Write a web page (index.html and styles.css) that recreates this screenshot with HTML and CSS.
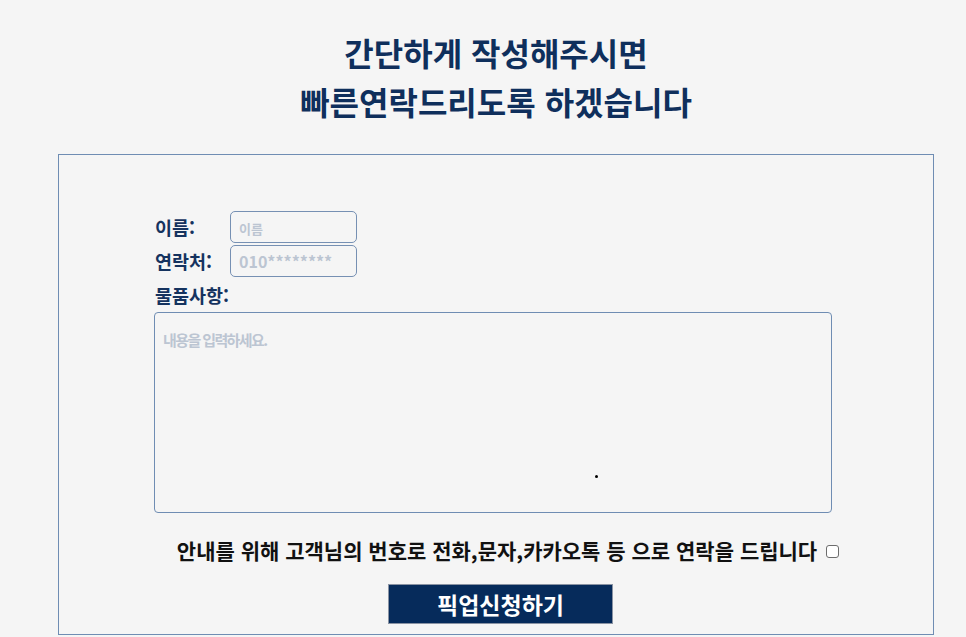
FILE: index.html
```html
<!DOCTYPE html>
<html lang="ko">
<head>
<meta charset="utf-8">
<title>픽업신청</title>
<link rel="stylesheet" href="styles.css">
</head>
<body>
<div class="page">
  <h2 class="title">간단하게 작성해주시면<br>빠른연락드리도록 하겠습니다</h2>
  <form class="box">
    <div class="fields">
      <label class="lbl" for="name">이름:</label>
      <input class="inp name-inp" id="name" type="text" placeholder="이름">
      <label class="lbl" for="tel">연락처:</label>
      <input class="inp" id="tel" type="text" placeholder="010********">
    </div>
    <div class="lbl memo-lbl">물품사항:</div>
    <div class="memo-wrap">
      <textarea class="memo" placeholder="내용을 입력하세요."></textarea>
      <span class="dot"></span>
    </div>
    <div class="consent">
      <span>안내를 위해 고객님의 번호로 전화,문자,카카오톡 등 으로 연락을 드립니다</span>
      <span class="chk"></span>
    </div>
    <div class="btn-row">
      <button type="button" class="btn">픽업신청하기</button>
    </div>
  </form>
</div>
</body>
</html>
```

FILE: styles.css
```css
html, body {
  margin: 0;
  padding: 0;
  background: #f5f5f5;
}
body {
  font-family: "Noto Sans CJK KR", "Noto Sans", sans-serif;
  height: 637px;
  overflow: hidden;
}
.page {
  width: 876px;
  margin-left: 58px;
}
.title {
  margin: 28px 0 0;
  text-align: center;
  font-size: 32px;
  line-height: 49px;
  font-weight: 700;
  color: #0f2f5c;
}
.box {
  margin-top: 28px;
  height: 481px;
  border: 1px solid #6f8db3;
  box-sizing: border-box;
  padding: 56px 0 0 96px;
}
.fields {
  display: grid;
  grid-template-columns: 75px 127px;
  grid-auto-rows: 32px;
  row-gap: 2px;
  align-items: center;
}
.lbl {
  font-size: 18.5px;
  font-weight: 700;
  color: #15335f;
  line-height: 24px;
}
.inp {
  box-sizing: border-box;
  width: 127px;
  height: 32px;
  border: 1px solid #7690b3;
  border-radius: 5px;
  background: #f5f5f5;
  padding: 0 8px;
  font-family: "Noto Sans CJK KR", sans-serif;
  font-size: 16px;
  font-weight: 700;
  outline: none;
}
.inp::placeholder {
  color: #bcc5d2;
}
.name-inp::placeholder {
  font-size: 13px;
}
.memo-lbl {
  margin-top: 6px;
  height: 24px;
}
.memo-wrap {
  position: relative;
  margin-top: 5px;
  width: 678px;
  margin-left: -1px;
}
.memo {
  display: block;
  box-sizing: border-box;
  width: 678px;
  height: 201px;
  border: 1px solid #6f8db3;
  border-radius: 4px;
  background: #f5f5f5;
  padding: 16px 8px;
  font-family: "Noto Sans CJK KR", sans-serif;
  font-size: 15px;
  font-weight: 700;
  line-height: 22px;
  resize: none;
  outline: none;
}
.memo::placeholder {
  color: #bcc5d2;
  letter-spacing: -1.6px;
}
.dot {
  position: absolute;
  left: 441px;
  top: 163px;
  width: 3px;
  height: 3px;
  border-radius: 50%;
  background: #000;
}
.consent {
  margin: 23px 0 0 24px;
  width: 658px;
  display: flex;
  align-items: center;
  justify-content: center;
  gap: 9px;
  font-size: 21px;
  font-weight: 700;
  color: #111;
  line-height: 28px;
  white-space: nowrap;
}
.chk {
  flex: none;
  width: 11px;
  height: 11px;
  border: 1px solid #6d6d6d;
  border-radius: 3px;
  background: #fff;
  margin-top: 2px;
}
.btn-row {
  margin: 20px 0 0 233px;
}
.btn {
  width: 225px;
  height: 40px;
  background: #062b5b;
  border: 1px solid #8a93a3;
  color: #fff;
  font-family: "Noto Sans CJK KR", sans-serif;
  font-size: 23px;
  font-weight: 700;
  line-height: 1;
  padding: 0;
}
```
